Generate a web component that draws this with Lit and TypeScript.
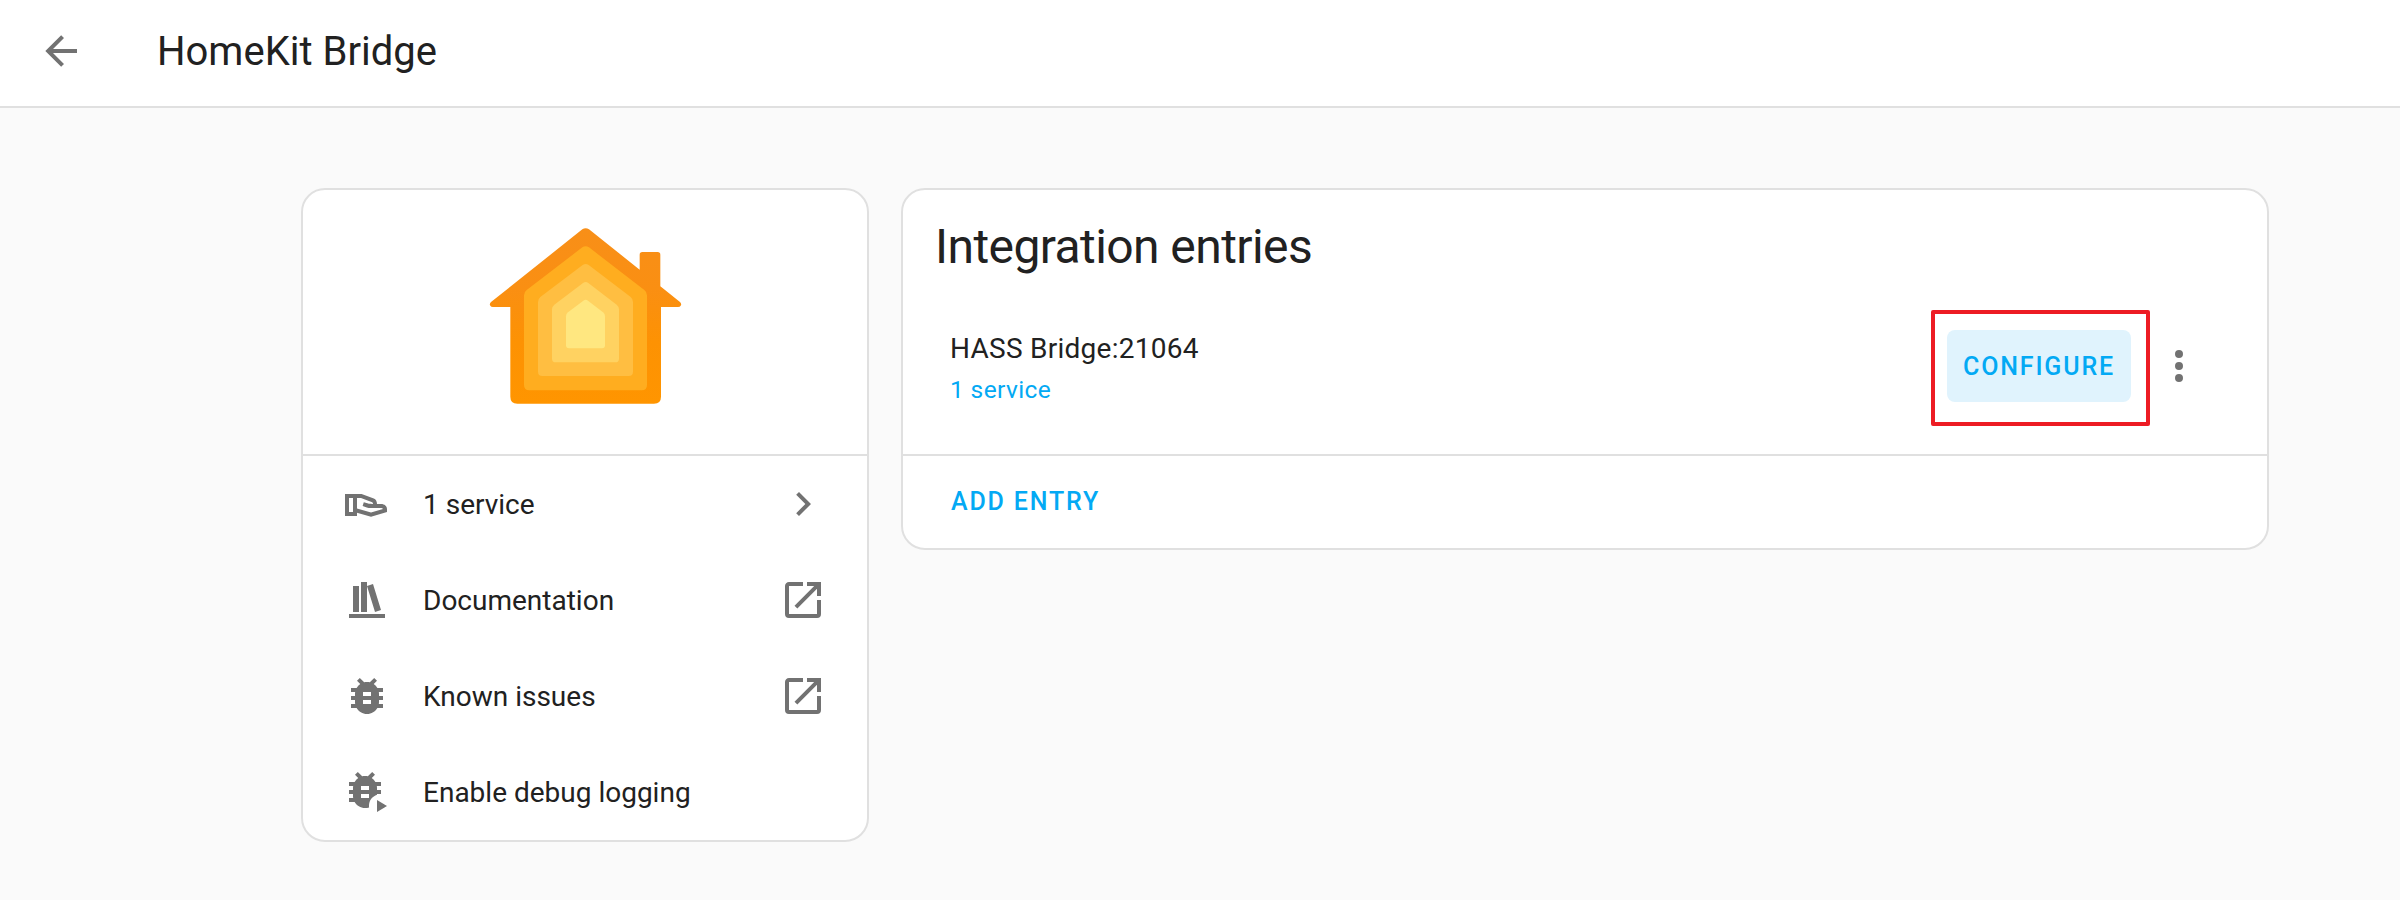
import { LitElement, html, css, svg } from "lit";
import { customElement, property } from "lit/decorators.js";

const icons: Record<string, string> = {
  back: "M20,11V13H8L13.5,18.5L12.08,19.92L4.16,12L12.08,4.08L13.5,5.5L8,11H20Z",
  chevron: "M8.59,16.58L13.17,12L8.59,7.41L10,6L16,12L10,18L8.59,16.58Z",
  open: "M14,3V5H17.59L7.76,14.83L9.17,16.24L19,6.41V10H21V3M19,19H5V5H12V3H5C3.89,3 3,3.9 3,5V19A2,2 0 0,0 5,21H19A2,2 0 0,0 21,19V12H19V19Z",
  books: "M9 3V18H12V3H9M12 5L16 18L19 17L15 4L12 5M5 5V18H8V5H5M3 19V21H21V19H3Z",
  dots: "M12,16A2,2 0 0,1 14,18A2,2 0 0,1 12,20A2,2 0 0,1 10,18A2,2 0 0,1 12,16M12,10A2,2 0 0,1 14,12A2,2 0 0,1 12,14A2,2 0 0,1 10,12A2,2 0 0,1 12,10M12,4A2,2 0 0,1 14,6A2,2 0 0,1 12,8A2,2 0 0,1 10,6A2,2 0 0,1 12,4Z",
  bug: "M14,12H10V10H14M14,16H10V14H14M20,8H17.19C16.74,7.22 16.12,6.55 15.37,6.04L17,4.41L15.59,3L13.42,5.17C12.96,5.06 12.5,5 12,5C11.5,5 11.04,5.06 10.59,5.17L8.41,3L7,4.41L8.62,6.04C7.88,6.55 7.26,7.22 6.81,8H4V10H6.09C6.04,10.33 6,10.66 6,11V12H4V14H6V15C6,15.34 6.04,15.67 6.09,16H4V18H6.81C7.85,19.79 9.78,21 12,21C14.22,21 16.15,19.79 17.19,18H20V16H17.91C17.96,15.67 18,15.34 18,15V14H20V12H18V11C18,10.66 17.96,10.33 17.91,10H20V8Z",
  bugPlay: "M13,11H9V9H13M13,15H9V13H13M13,19C13,16.1 14.7,14.3 17,13.4V13H19V11H17V10C17,9.66 16.96,9.33 16.91,9H19V7H16.19C15.74,6.22 15.12,5.55 14.37,5.04L16,3.41L14.59,2L12.42,4.17C11.96,4.06 11.5,4 11,4C10.5,4 10.04,4.06 9.59,4.17L7.41,2L6,3.41L7.62,5.04C6.88,5.55 6.26,6.22 5.81,7H3V9H5.09C5.04,9.33 5,9.66 5,10V11H3V13H5V14C5,14.34 5.04,14.67 5.09,15H3V17H5.81C6.85,18.79 8.78,20 11,20C11.7,20 12.4,19.9 13.06,19.7C13,19.5 13,19.2 13,19M17,16V22L22,19Z",
  hand: "M1,7H9.3L15.4,9.3C16.4,9.7 17,10.8 17,12H19C20.8,12 22,13.1 22,14.6V16L14,18.4L7,16.4V18H1M3,9V16H5V9M7,9V14.3L14,16.3L20,14.5C19.8,14.2 19.5,14 19.1,14H13.7C13.1,14 12.5,13.9 11.9,13.7L9.8,13L10.4,11.1L12.6,11.8C13.2,12 15,12 15,12C15,11.6 14.9,11.3 14.6,11.1L9,9Z",
};

@customElement("md-icon")
export class MdIcon extends LitElement {
  @property() name = "";
  static styles = css`
    :host { display: block; width: 48px; height: 48px; flex: none; color: #727272; }
    svg { display: block; width: 100%; height: 100%; fill: currentColor; }
  `;
  render() {
    return html`<svg viewBox="0 0 24 24"><path fill-rule="evenodd" d=${icons[this.name]}></path></svg>`;
  }
}

@customElement("home-logo")
export class HomeLogo extends LitElement {
  static styles = css`
    :host { display: block; }
    svg { display: block; width: 240px; height: 210px; }
  `;
  render() {
    return html`<svg viewBox="-15 0 720 630">
      <defs>
        <linearGradient id="wall" x1="0" y1="0" x2="0" y2="1">
          <stop offset="0" stop-color="#f88f18"></stop>
          <stop offset="0.35" stop-color="#fa8f12"></stop>
          <stop offset="0.65" stop-color="#fd9203"></stop>
          <stop offset="1" stop-color="#ff9500"></stop>
        </linearGradient>
      </defs>
      <path fill="url(#wall)" d="M337 58Q347 51 357 58L509 179V134Q509 126 517 126H563Q571 126 571 134V229L630 276Q636 282 632 287Q630 291 624 291H573V560Q573 581 552 581H142Q121 581 121 560V291H69Q63 291 61 287Q57 282 63 276Z"></path>
      ${[
        ["#ffad1f", "M337 112Q347 105 357 112L523 240Q531 246 531 256V525Q531 541 515 541H178Q162 541 162 525V256Q162 246 170 240Z"],
        ["#ffbe41", "M338 165Q347 159 356 165L482 261Q489 267 489 276V485Q489 498 476 498H217Q204 498 204 485V276Q204 267 211 261Z"],
        ["#ffd261", "M339 219Q347 213 355 219L440 284Q447 290 447 298V446Q447 457 436 457H257Q246 457 246 446V298Q246 290 253 284Z"],
        ["#ffe780", "M340 272Q347 267 354 272L399 307Q405 312 405 319V406Q405 415 396 415H297Q288 415 288 406V319Q288 312 294 307Z"],
      ].map(([fill, d]) => svg`<path fill=${fill} d=${d}></path>`)}
    </svg>`;
  }
}

interface Row { icon: string; label: string; end?: string }

const rows: Row[] = [
  { icon: "hand", label: "1 service", end: "chevron" },
  { icon: "books", label: "Documentation", end: "open" },
  { icon: "bug", label: "Known issues", end: "open" },
  { icon: "bugPlay", label: "Enable debug logging" },
];

@customElement("app-root")
export class AppRoot extends LitElement {
  static styles = css`
    :host {
      display: flex; flex-direction: column; height: 900px; overflow: hidden;
      background: #fafafa; color: #212121;
      font-family: Roboto, sans-serif; font-size: 28px;
    }
    * { box-sizing: border-box; }
    header {
      display: flex; align-items: center; gap: 72px; height: 108px;
      padding: 0 37px 4px; background: #fff; border-bottom: 2px solid #e0e0e0;
    }
    .title { font-size: 40px; line-height: 40px; padding-top: 2px; }
    main { display: flex; align-items: flex-start; gap: 32px; padding: 80px 0 0 301px; }
    .card { background: #fff; border: 2px solid #e0e0e0; border-radius: 24px; }
    .info { width: 568px; }
    .entries { width: 1368px; }
    .logo { display: flex; justify-content: center; height: 266px; padding-top: 20px; border-bottom: 2px solid #e0e0e0; }
    .row { display: flex; align-items: center; gap: 32px; height: 96px; padding: 0 40px; }
    .label { flex: 1; }
    .top { height: 266px; border-bottom: 2px solid #e0e0e0; }
    h1 { margin: 0; padding: 25px 32px 0; height: 104px; font-size: 48px; font-weight: 400; line-height: 64px; letter-spacing: -0.576px; }
    .entry { display: flex; align-items: center; height: 144px; padding: 0 64px 0 47px; }
    .names { flex: 1; padding-top: 7px; }
    .name { line-height: 40px; letter-spacing: 0.2625px; }
    .services { font-size: 24.5px; line-height: 41px; color: #03a9f4; letter-spacing: 0.38px; }
    .configure {
      position: relative; height: 72px; width: 184px; margin-right: 24px; border-radius: 8px;
      background: #e0f3fd; text-align: center; line-height: 74px;
    }
    .caps { font-size: 25px; font-weight: 500; color: #03a9f4; letter-spacing: 1.85px; white-space: nowrap; }
    .mark { position: absolute; left: -16px; top: -20px; width: 219px; height: 116px; border: 4px solid #ed1c24; border-radius: 2px; }
    .add { height: 92px; padding-left: 48px; line-height: 92px; }
  `;
  render() {
    return html`
      <header><md-icon name="back"></md-icon><div class="title">HomeKit Bridge</div></header>
      <main>
        <section class="card info">
          <div class="logo"><home-logo></home-logo></div>
          ${rows.map((r) => html`<div class="row">
            <md-icon name=${r.icon}></md-icon><span class="label">${r.label}</span>
            ${r.end ? html`<md-icon name=${r.end}></md-icon>` : null}
          </div>`)}
        </section>
        <section class="card entries">
          <div class="top">
            <h1>Integration entries</h1>
            <div class="entry">
              <div class="names">
                <div class="name">HASS Bridge:21064</div>
                <div class="services">1 service</div>
              </div>
              <div class="configure caps">CONFIGURE<div class="mark"></div></div>
              <md-icon name="dots"></md-icon>
            </div>
          </div>
          <div class="add caps">ADD ENTRY</div>
        </section>
      </main>`;
  }
}
